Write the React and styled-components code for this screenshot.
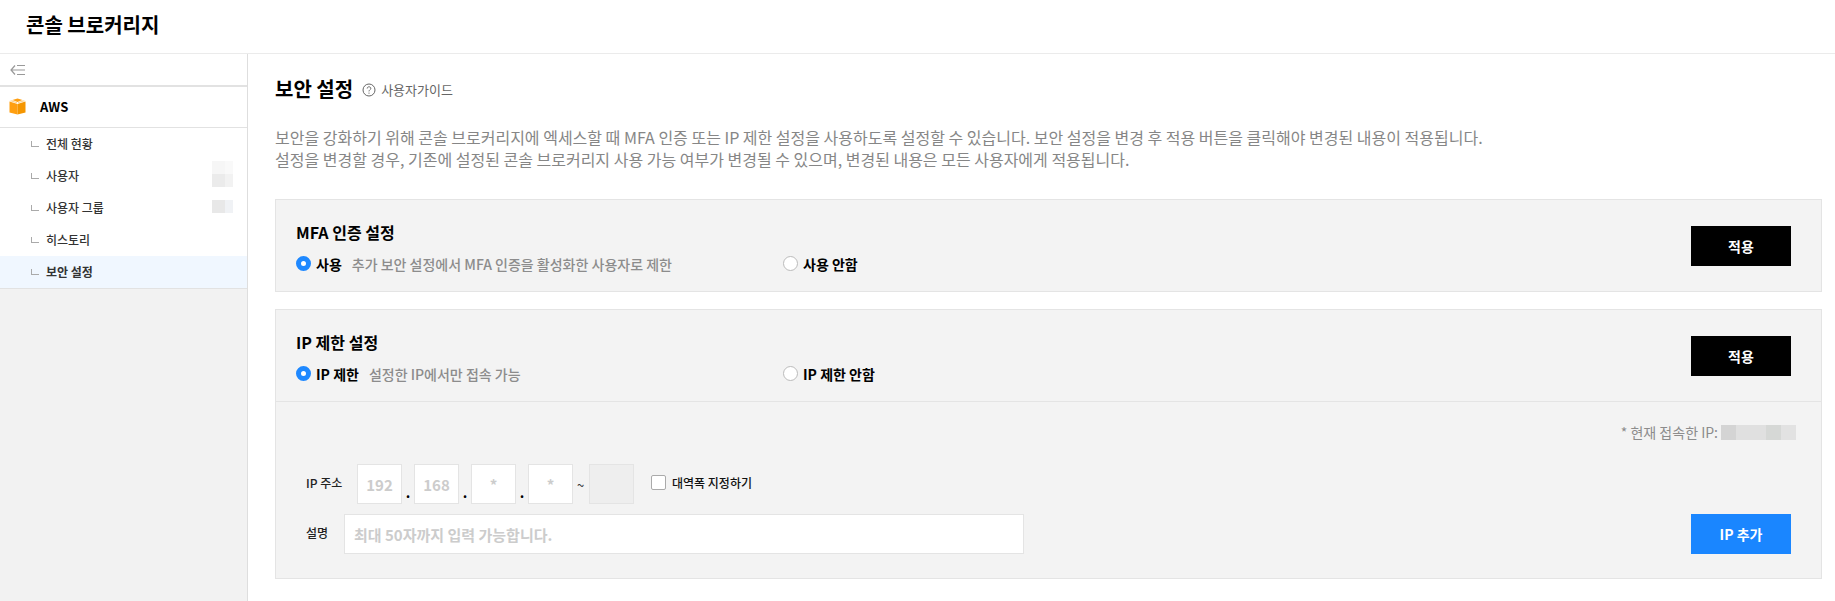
import React from "react";
import styled, { createGlobalStyle } from "styled-components";

const GlobalStyle = createGlobalStyle`
  html, body {
    margin: 0;
    padding: 0;
    background: #fff;
    font-family: "Noto Sans CJK KR", "Noto Sans", sans-serif;
    color: #000;
  }
  * {
    box-sizing: border-box;
  }
`;

const Page = styled.div`
  height: 601px;
  overflow: hidden;
  display: flex;
  flex-direction: column;
`;

const Header = styled.header`
  height: 54px;
  flex: none;
  display: flex;
  align-items: center;
  padding: 0 0 4px 26px;
  border-bottom: 1px solid #ebebeb;
`;

const Brand = styled.h1`
  margin: 0;
  font-size: 20px;
  font-weight: 700;
`;

const Body = styled.div`
  flex: 1;
  display: flex;
  min-height: 0;
`;

// Sidebar
const Sidebar = styled.aside`
  width: 248px;
  flex: none;
  background: #f2f2f2;
  border-right: 1px solid #dedede;
`;

const Collapse = styled.div`
  height: 33px;
  background: #fff;
  display: flex;
  align-items: center;
  padding-left: 10px;
  border-bottom: 2px solid #e2e2e2;
`;

const CloudRow = styled.div`
  height: 41px;
  background: #fff;
  display: flex;
  align-items: center;
  gap: 14px;
  padding: 0 0 1px 9px;
  border-bottom: 1px solid #e2e2e2;
  font-size: 13px;
  font-weight: 700;
`;

const MenuList = styled.ul`
  list-style: none;
  margin: 0;
  padding: 0;
  background: #fff;
  border-bottom: 1px solid #e2e2e2;
`;

const MenuItem = styled.li`
  height: 32px;
  display: flex;
  align-items: center;
  padding: 0 14px 1px 31px;
  font-size: 12px;
  font-weight: ${(p) => (p.$active ? 700 : 500)};
  color: #333;
  background: ${(p) => (p.$active ? "#f0f7ff" : "#fff")};
`;

const Tick = styled.i`
  width: 8px;
  height: 6px;
  margin-right: 7px;
  margin-top: 1px;
  border-left: 1px solid #aaa;
  border-bottom: 1px solid #aaa;
`;

const MenuLabel = styled.span`
  flex: 1;
`;

const Mosaic = styled.div`
  display: grid;
  grid-template-columns: 13px 8px;
  grid-auto-rows: 13px;
  margin-bottom: 3px;
`;

const MosaicCell = styled.i`
  background: ${(p) => p.$c};
`;

// Main content
const Main = styled.main`
  flex: 1;
  min-width: 0;
  padding: 19px 13px 0 27px;
`;

const TitleRow = styled.div`
  height: 30px;
  display: flex;
  align-items: center;
`;

const Title = styled.h2`
  margin: 0 9px 0 0;
  font-size: 20px;
  font-weight: 700;
`;

const GuideLink = styled.a`
  display: flex;
  align-items: center;
  gap: 5px;
  margin-top: 3px;
  font-size: 13px;
  color: #666;
`;

const Description = styled.p`
  margin: 23px 0 29px;
  font-size: 16px;
  line-height: 22px;
  color: #868686;
`;

const Panel = styled.section`
  background: #f3f3f3;
  border: 1px solid #e4e4e4;
  margin-bottom: 17px;
`;

const PanelHead = styled.div`
  height: ${(p) => (p.$divided ? "92px" : "91px")};
  display: flex;
  align-items: center;
  justify-content: space-between;
  padding: 0 30px 0 20px;
  border-bottom: ${(p) => (p.$divided ? "1px solid #e4e4e4" : "none")};
`;

const PanelSummary = styled.div`
  padding-top: 4px;
`;

const PanelTitle = styled.h3`
  margin: 0 0 10px;
  font-size: 16px;
  line-height: 22px;
  font-weight: 700;
`;

const RadioGrid = styled.div`
  display: grid;
  grid-template-columns: 487px auto;
  align-items: center;
  height: 22px;
`;

const RadioOption = styled.label`
  display: flex;
  align-items: center;
  font-size: 14px;
  font-weight: 700;
`;

const RadioDot = styled.i`
  width: 15px;
  height: 15px;
  border-radius: 50%;
  margin-right: 5px;
  background: #fff;
  border: ${(p) => (p.$on ? "5px solid #1e88ff" : "1px solid #bbb")};
`;

const RadioHint = styled.span`
  margin-left: 10px;
  font-size: 14px;
  font-weight: 500;
  color: #8c8c8c;
`;

const Button = styled.button`
  width: 100px;
  height: 40px;
  border: 0;
  padding: 0;
  background: ${(p) => (p.$primary ? "#1a86ff" : "#000")};
  color: #fff;
  font-family: inherit;
  font-size: 14px;
  font-weight: 700;
`;

const PanelBody = styled.div`
  padding: 20px 30px 24px 30px;
`;

const CurrentIp = styled.div`
  display: flex;
  justify-content: flex-end;
  align-items: center;
  height: 20px;
  margin-right: -5px;
  font-size: 14px;
  color: #8c8c8c;
  gap: 3px;
`;

const IpMask = styled.div`
  display: flex;
`;

const IpMaskCell = styled.i`
  width: 15px;
  height: 15px;
  background: ${(p) => p.$c};
`;

const IpRow = styled.div`
  display: flex;
  align-items: center;
  margin-top: 22px;
  height: 40px;
`;

const AddRow = styled.div`
  display: flex;
  align-items: center;
  justify-content: space-between;
  margin-top: 10px;
  height: 40px;
`;

const AddFields = styled.div`
  display: flex;
  align-items: center;
`;

const FieldLabel = styled.span`
  width: ${(p) => p.$w}px;
  flex: none;
  font-size: 12px;
  font-weight: 500;
  color: #222;
  margin-top: -4px;
`;

const OctetBox = styled.div`
  width: 45px;
  height: 40px;
  display: flex;
  align-items: center;
  justify-content: center;
  font-size: 15px;
  font-weight: 700;
  color: #cccccc;
  background: ${(p) => (p.$disabled ? "#eeeeee" : "#fff")};
  border: 1px solid #e4e4e4;
`;

const Dot = styled.span`
  width: 12px;
  text-align: center;
  align-self: flex-end;
  font-size: 14px;
  line-height: 14px;
  margin-bottom: 5px;
  font-weight: 700;
`;

const Tilde = styled.span`
  width: 16px;
  padding-left: 4px;
  font-size: 13px;
  color: #333;
`;

const CheckLabel = styled.label`
  display: flex;
  align-items: center;
  gap: 6px;
  margin-left: 17px;
  margin-top: -4px;
  font-size: 12px;
  font-weight: 500;
  color: #111;
`;

const CheckBox = styled.i`
  width: 15px;
  height: 15px;
  background: #fff;
  border: 1px solid #aaa;
  border-radius: 2px;
`;

const DescField = styled.div`
  width: 680px;
  height: 40px;
  display: flex;
  align-items: center;
  padding-left: 9px;
  background: #fff;
  border: 1px solid #e4e4e4;
  font-size: 15px;
  font-weight: 700;
  color: #cccccc;
`;

const menu = [
  { label: "전체 현황" },
  {
    label: "사용자",
    mosaic: ["#f6f6f6", "#f9f9f9", "#ebebeb", "#f2f2f2"],
  },
  { label: "사용자 그룹", mosaic: ["#e8e8e8", "#f0f2f5"] },
  { label: "히스토리" },
  { label: "보안 설정", active: true },
];

const CollapseIcon = () => (
  <svg width="16" height="12" viewBox="0 0 16 12" fill="none" stroke="#999" strokeWidth="1.2">
    <path d="M5 1.5 1 6l4 4.5M1 6h14M7 1.5h8M7 10.5h8" />
  </svg>
);

const CubeIcon = () => (
  <svg width="17" height="17" viewBox="0 0 17 17">
    <path d="M0.5 3.5 8.5 6v10.5L0.5 14.5z" fill="#ff9f10" />
    <path d="M16.5 3.5 8.5 6v10.5l8-2z" fill="#f59600" />
    <path d="M8.5 0.5 3.5 2l5 2 5-2z" fill="#ff9f10" />
    <path d="M0.5 3 3 2.2 8 4.2v1.1zM16.5 3 14 2.2 9 4.2v1.1z" fill="#f8a51e" opacity="0.5" />
  </svg>
);

const HelpIcon = () => (
  <svg width="14" height="14" viewBox="0 0 14 14" fill="none" stroke="#666" strokeWidth="1">
    <circle cx="7" cy="7" r="6" />
    <path d="M5.2 5.5C5.2 4.4 6 3.8 7 3.8s1.8.6 1.8 1.6c0 1.4-1.8 1.4-1.8 3" />
    <path d="M7 9.6v1.1" />
  </svg>
);

const App = () => {
  return (
    <Page>
      <GlobalStyle />
      <Header>
        <Brand>콘솔 브로커리지</Brand>
      </Header>
      <Body>
        <Sidebar>
          <Collapse>
            <CollapseIcon />
          </Collapse>
          <CloudRow>
            <CubeIcon />
            AWS
          </CloudRow>
          <MenuList>
            {menu.map((item) => (
              <MenuItem key={item.label} $active={item.active}>
                <Tick />
                <MenuLabel>{item.label}</MenuLabel>
                {item.mosaic && (
                  <Mosaic>
                    {item.mosaic.map((c, i) => (
                      <MosaicCell key={i} $c={c} />
                    ))}
                  </Mosaic>
                )}
              </MenuItem>
            ))}
          </MenuList>
        </Sidebar>
        <Main>
          <TitleRow>
            <Title>보안 설정</Title>
            <GuideLink>
              <HelpIcon />
              사용자가이드
            </GuideLink>
          </TitleRow>
          <Description>
            보안을 강화하기 위해 콘솔 브로커리지에 엑세스할 때 MFA 인증 또는 IP 제한 설정을 사용하도록 설정할 수 있습니다. 보안 설정을 변경 후 적용 버튼을 클릭해야 변경된 내용이 적용됩니다.
            <br />
            설정을 변경할 경우, 기존에 설정된 콘솔 브로커리지 사용 가능 여부가 변경될 수 있으며, 변경된 내용은 모든 사용자에게 적용됩니다.
          </Description>
          <Panel>
            <PanelHead>
              <PanelSummary>
                <PanelTitle>MFA 인증 설정</PanelTitle>
                <RadioGrid>
                  <RadioOption>
                    <RadioDot $on />
                    사용
                    <RadioHint>추가 보안 설정에서 MFA 인증을 활성화한 사용자로 제한</RadioHint>
                  </RadioOption>
                  <RadioOption>
                    <RadioDot />
                    사용 안함
                  </RadioOption>
                </RadioGrid>
              </PanelSummary>
              <Button>적용</Button>
            </PanelHead>
          </Panel>
          <Panel>
            <PanelHead $divided>
              <PanelSummary>
                <PanelTitle>IP 제한 설정</PanelTitle>
                <RadioGrid>
                  <RadioOption>
                    <RadioDot $on />
                    IP 제한
                    <RadioHint>설정한 IP에서만 접속 가능</RadioHint>
                  </RadioOption>
                  <RadioOption>
                    <RadioDot />
                    IP 제한 안함
                  </RadioOption>
                </RadioGrid>
              </PanelSummary>
              <Button>적용</Button>
            </PanelHead>
            <PanelBody>
              <CurrentIp>
                * 현재 접속한 IP:
                <IpMask>
                  {["#d4d4d4", "#e0e0e0", "#e0e0e0", "#d6d8d6", "#e2e2e2"].map((c, i) => (
                    <IpMaskCell key={i} $c={c} />
                  ))}
                </IpMask>
              </CurrentIp>
              <IpRow>
                <FieldLabel $w={51}>IP 주소</FieldLabel>
                <OctetBox>192</OctetBox>
                <Dot>.</Dot>
                <OctetBox>168</OctetBox>
                <Dot>.</Dot>
                <OctetBox>*</OctetBox>
                <Dot>.</Dot>
                <OctetBox>*</OctetBox>
                <Tilde>~</Tilde>
                <OctetBox $disabled />
                <CheckLabel>
                  <CheckBox />
                  대역폭 지정하기
                </CheckLabel>
              </IpRow>
              <AddRow>
                <AddFields>
                  <FieldLabel $w={38}>설명</FieldLabel>
                  <DescField>최대 50자까지 입력 가능합니다.</DescField>
                </AddFields>
                <Button $primary>IP 추가</Button>
              </AddRow>
            </PanelBody>
          </Panel>
        </Main>
      </Body>
    </Page>
  );
};

export default App;
